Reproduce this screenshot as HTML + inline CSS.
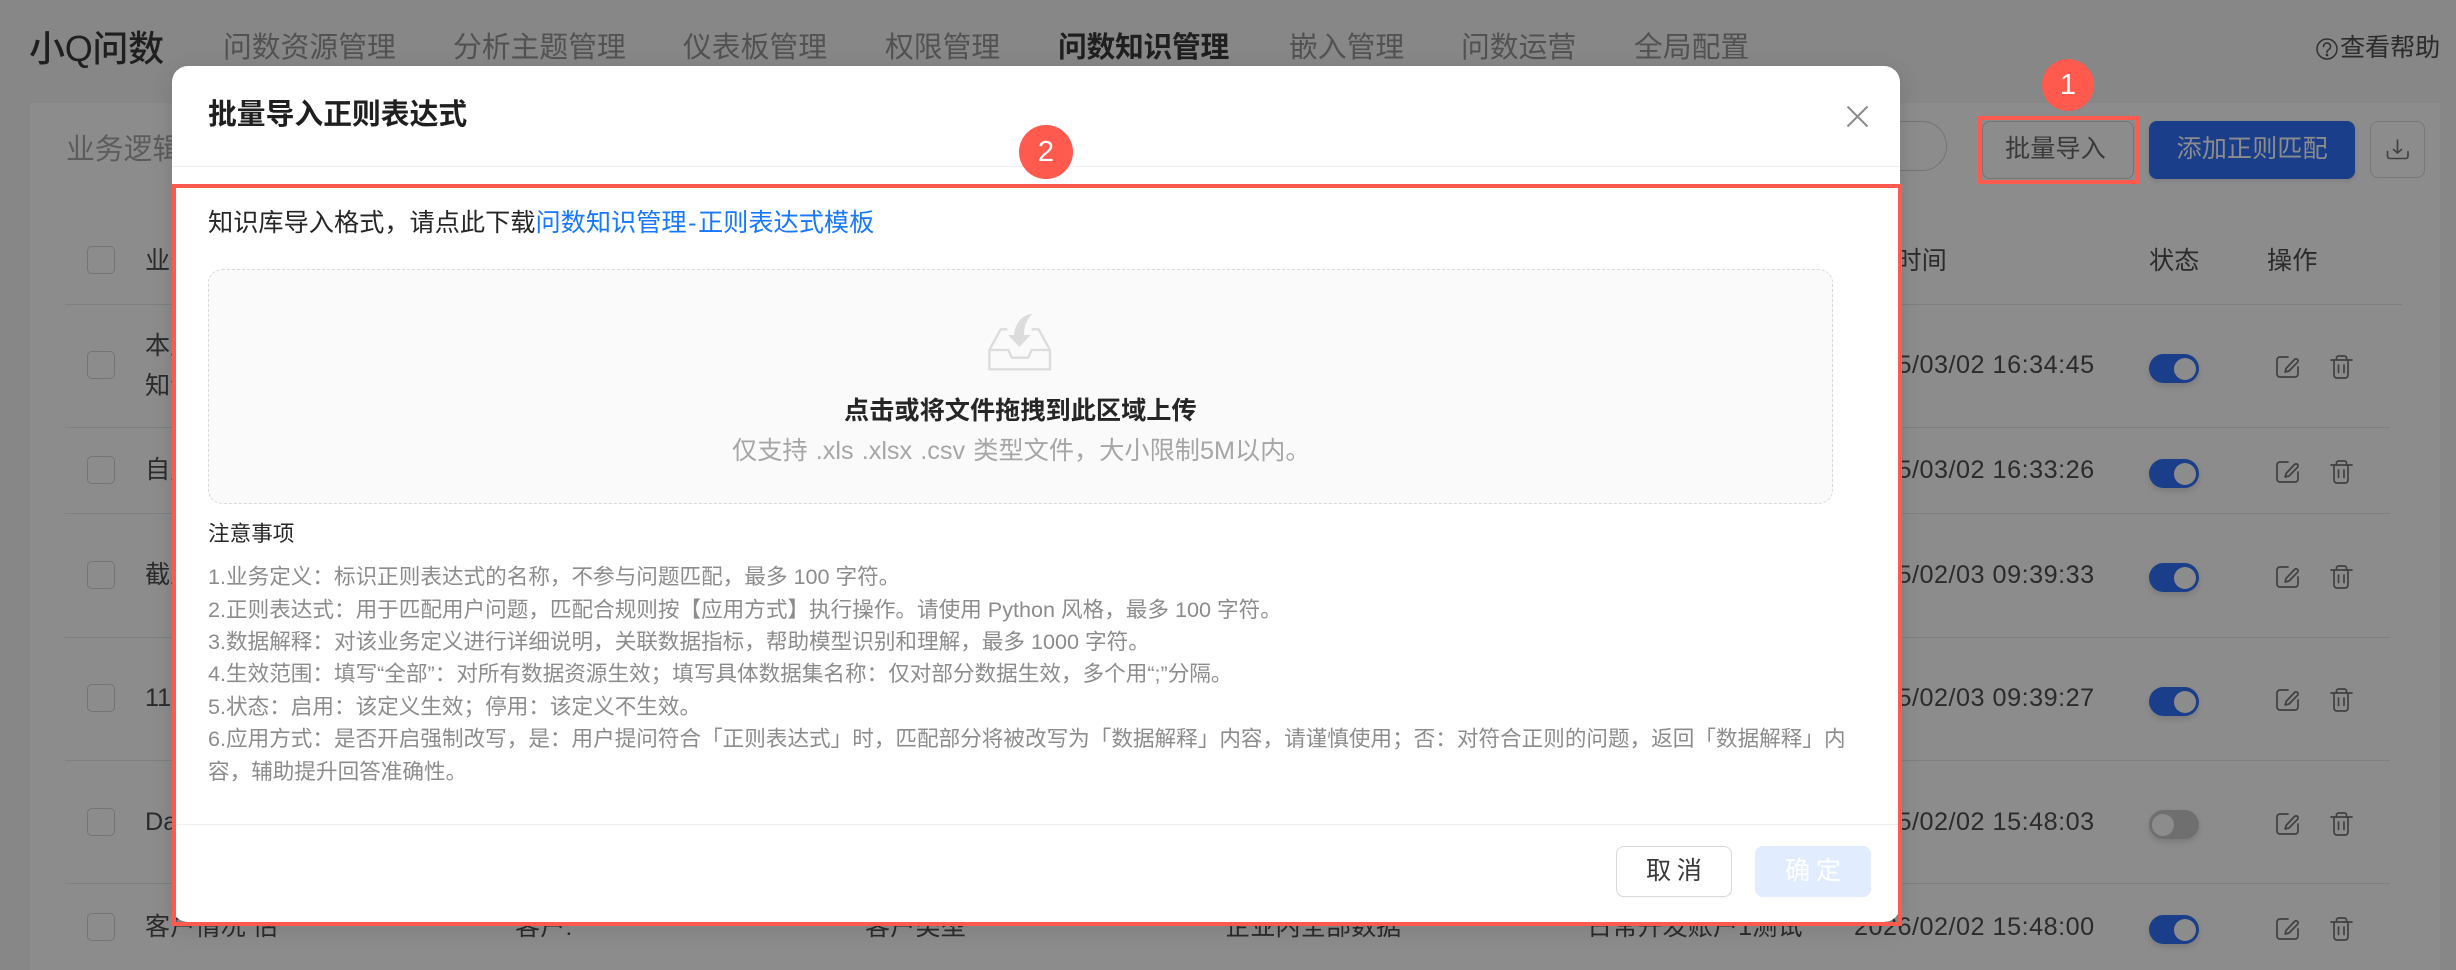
<!DOCTYPE html>
<html lang="zh-CN"><head><meta charset="utf-8"><title>批量导入正则表达式</title>
<style>
*{box-sizing:border-box;margin:0;padding:0}
html,body{width:2456px;height:970px;overflow:hidden;background:#878787}
body{position:relative;font-family:"Liberation Sans","Noto Sans CJK SC",sans-serif}
.t{position:absolute;white-space:nowrap;line-height:1}
.nav{font-size:28.8px;color:#525252;top:34px}
.r{font-size:25.2px;color:#2b2b2b}
.card{position:absolute;left:30px;top:103px;width:2410px;height:867px;background:#8c8c8c}
.hl{position:absolute;left:65px;width:2325px;height:1px;background:#7f7f7f}
.cb{position:absolute;left:87px;width:28px;height:28px;border:1.5px solid #747474;border-radius:5px;background:#8c8c8c}
.tg{position:absolute;left:2149px;width:50px;height:29px;border-radius:15px;background:#1a3e8a;box-shadow:0 3px 6px rgba(0,0,0,.12)}
.tg i{position:absolute;left:25px;top:3.5px;width:22px;height:22px;border-radius:50%;background:#8c8c8c}
.tg.off{background:#6f6f6f}.tg.off i{left:3px}
.ic{position:absolute;left:2260px;width:110px;height:32px;overflow:visible}
.btn{position:absolute;border-radius:8px;top:121px;height:58px}
.dlg{position:absolute;left:172px;top:66px;width:1728px;height:856px;background:#fff;border-radius:16px;box-shadow:0 6px 24px rgba(0,0,0,.12)}
.red{position:absolute;border:4px solid #ff5a4d}
.badge{position:absolute;border-radius:50%;background:#ff5a4d;color:#fff;font-size:29px;text-align:center;font-weight:500}
.note{font-size:21.6px;color:#8c8c8c;left:208px}
</style></head>
<body>
<svg width="0" height="0" style="position:absolute"><defs>
<symbol id="ops" viewBox="0 0 110 32">
<g fill="none" stroke="#404040" stroke-width="1.7" stroke-linecap="round" stroke-linejoin="round">
<path d="M28 3H20a3 3 0 0 0-3 3V20a3 3 0 0 0 3 3H35a3 3 0 0 0 3-3V13"/>
<path d="M26 14.5L34.500 5.500a2 2 0 0 1 3 2.800L29 17l-3.800 1z"/>
<path d="M71 6H92M76.500 6V4a2 2 0 0 1 2-2h6a2 2 0 0 1 2 2V6M74 6V21a3 3 0 0 0 3 3h8a3 3 0 0 0 3-3V6M78.500 11V18.500M84 11V18.500"/>
</g></symbol>
</defs></svg>

<div class="t" style="left:29px;top:31px;font-size:36px;color:#1f1f1f;font-weight:500;letter-spacing:-.3px">小Q问数</div>
<div class="t nav" style="left:223px">问数资源管理</div>
<div class="t nav" style="left:453px">分析主题管理</div>
<div class="t nav" style="left:683px">仪表板管理</div>
<div class="t nav" style="left:885px">权限管理</div>
<div class="t nav" style="left:1058px;color:#1f1f1f;font-weight:700;letter-spacing:-.3px">问数知识管理</div>
<div class="t nav" style="left:1289px">嵌入管理</div>
<div class="t nav" style="left:1461px">问数运营</div>
<div class="t nav" style="left:1634px">全局配置</div>
<svg style="position:absolute;left:2315px;top:37px" width="24" height="24" viewBox="0 0 24 24" fill="none" stroke="#303030" stroke-width="1.500"><circle cx="12" cy="12" r="10"/><path d="M8.500 9.500a3.500 3.500 0 1 1 5.300 3c-1.300.8-1.800 1.300-1.800 2.700" stroke-linecap="round"/><circle cx="12" cy="18" r=".6" fill="#303030"/></svg>
<div class="t" style="left:2340px;top:36px;font-size:25.2px;color:#2b2b2b;letter-spacing:-.2px">查看帮助</div>

<div class="card"></div>
<div class="t" style="left:66px;top:136px;font-size:28.8px;color:#5c5c5c">业务逻辑</div>
<div class="btn" style="left:1700px;width:247px;top:121px;height:50px;border:1.500px solid #747474;border-radius:25px"></div>
<div class="btn" style="left:1982px;width:152px;border:1.500px solid #747474"></div>
<div class="t r" style="left:2005px;top:137px;color:#3a3a3a">批量导入</div>
<div class="btn" style="left:2149px;width:206px;background:#1a3e8a;box-shadow:0 2px 4px rgba(0,0,0,.1)"></div>
<div class="t r" style="left:2176.500px;top:137px;color:#8c8c8c">添加正则匹配</div>
<div class="btn" style="left:2370px;width:55px;height:57px;border:1.500px solid #787878"></div>
<svg style="position:absolute;left:2384px;top:137px" width="28" height="26" viewBox="0 0 28 26" fill="none" stroke="#404040" stroke-width="1.600" stroke-linecap="round" stroke-linejoin="round"><path d="M13.500 3V16M9.500 12.500l4 3.500 4-3.500M3.500 14.500V19a2.500 2.500 0 0 0 2.500 2.500H21.500a2.500 2.500 0 0 0 2.500-2.500V14.500"/></svg>

<div class="hl" style="top:304px;width:2337px"></div>
<div class="hl" style="top:427px"></div>
<div class="hl" style="top:513px"></div>
<div class="hl" style="top:637px"></div>
<div class="hl" style="top:760px"></div>
<div class="hl" style="top:883px"></div>

<div class="cb" style="top:246px"></div><div class="t r" style="left:145px;top:249px">业务定义</div>
<div class="t r" style="left:1846px;top:249px">更新时间</div>
<div class="t r" style="left:2149px;top:249px">状态</div>
<div class="t r" style="left:2267px;top:249px">操作</div>

<div class="cb" style="top:351px"></div>
<div class="t r" style="left:145px;top:334px">本月</div><div class="t r" style="left:145px;top:374px">知识</div>
<div class="t r" style="left:1854px;top:353px;letter-spacing:.5px">2025/03/02 16:34:45</div>
<div class="tg" style="top:354px"><i></i></div><svg class="ic" style="top:354px"><use href="#ops"/></svg>

<div class="cb" style="top:456px"></div>
<div class="t r" style="left:145px;top:458px">自定</div>
<div class="t r" style="left:1854px;top:458px;letter-spacing:.5px">2025/03/02 16:33:26</div>
<div class="tg" style="top:459px"><i></i></div><svg class="ic" style="top:459px"><use href="#ops"/></svg>

<div class="cb" style="top:561px"></div>
<div class="t r" style="left:145px;top:563px">截止</div>
<div class="t r" style="left:1854px;top:563px;letter-spacing:.5px">2025/02/03 09:39:33</div>
<div class="tg" style="top:563px"><i></i></div><svg class="ic" style="top:564px"><use href="#ops"/></svg>

<div class="cb" style="top:684px"></div>
<div class="t r" style="left:145px;top:686px">11</div>
<div class="t r" style="left:1854px;top:686px;letter-spacing:.5px">2025/02/03 09:39:27</div>
<div class="tg" style="top:687px"><i></i></div><svg class="ic" style="top:687px"><use href="#ops"/></svg>

<div class="cb" style="top:808px"></div>
<div class="t r" style="left:145px;top:810px">Data</div>
<div class="t r" style="left:1854px;top:810px;letter-spacing:.5px">2025/02/02 15:48:03</div>
<div class="tg off" style="top:810px"><i></i></div><svg class="ic" style="top:811px"><use href="#ops"/></svg>

<div class="cb" style="top:913px"></div>
<div class="t r" style="left:145px;top:915px">客户情况 估</div>
<div class="t r" style="left:515px;top:915px">客户:</div>
<div class="t r" style="left:865px;top:915px">客户类型</div>
<div class="t r" style="left:1225px;top:915px">企业内全部数据</div>
<div class="t r" style="left:1587px;top:915px">日常开发账户1测试</div>
<div class="t r" style="left:1854px;top:915px;letter-spacing:.5px">2026/02/02 15:48:00</div>
<div class="tg" style="top:915px"><i></i></div><svg class="ic" style="top:916px"><use href="#ops"/></svg>

<div class="dlg"></div>
<div class="t" style="left:208px;top:101px;font-size:28.8px;color:#1f1f1f;font-weight:700">批量导入正则表达式</div>
<svg style="position:absolute;left:1845px;top:104px" width="25" height="25" viewBox="0 0 25 25" stroke="#8c8c8c" stroke-width="2" fill="none"><path d="M2.500 2.500L22.500 22.500M22.500 2.500L2.500 22.500"/></svg>
<div style="position:absolute;left:172px;top:166px;width:1728px;height:1px;background:#efefef"></div>

<div class="t" style="left:208px;top:211px;font-size:25.2px;color:#262626">知识库导入格式，请点此下载<span style="color:#1677ff">问数知识管理<span style="letter-spacing:1.500px;margin-left:1.500px">-</span>正则表达式模板</span></div>

<div style="position:absolute;left:208px;top:269px;width:1625px;height:235px;background:#fafafa;border:1.500px dashed #d9d9d9;border-radius:14px"></div>
<svg style="position:absolute;left:900px;top:290px" width="220" height="110" viewBox="0 0 660 330"><g fill="none" stroke="#dcdcdc" stroke-width="7" stroke-linejoin="round"><path d="M322 118H302L268 180V238H450V180L416 118H395"/><path d="M268 180H325L335 203H385L395 180H450"/></g><path d="M398 71C365 75 345 100 342 135H324L358 171L392 135H372C372 108 380 88 398 71Z" fill="#dcdcdc"/></svg>
<div class="t" style="left:844px;top:399px;font-size:25.2px;color:#262626;font-weight:700">点击或将文件拖拽到此区域上传</div>
<div class="t" style="left:732px;top:439px;font-size:25.2px;color:#a6a6a6;word-spacing:1.200px">仅支持 .xls .xlsx .csv 类型文件，大小限制5M以内。</div>

<div class="t" style="left:208px;top:523px;font-size:21.6px;color:#262626">注意事项</div>
<div class="t note" style="top:566px">1.业务定义：标识正则表达式的名称，不参与问题匹配，最多 100 字符。</div>
<div class="t note" style="top:599px">2.正则表达式：用于匹配用户问题，匹配合规则按【应用方式】执行操作。请使用 Python 风格，最多 100 字符。</div>
<div class="t note" style="top:631px">3.数据解释：对该业务定义进行详细说明，关联数据指标，帮助模型识别和理解，最多 1000 字符。</div>
<div class="t note" style="top:663px">4.生效范围：填写“全部”：对所有数据资源生效；填写具体数据集名称：仅对部分数据生效，多个用“;”分隔。</div>
<div class="t note" style="top:696px">5.状态：启用：该定义生效；停用：该定义不生效。</div>
<div class="t note" style="top:728px">6.应用方式：是否开启强制改写，是：用户提问符合「正则表达式」时，匹配部分将被改写为「数据解释」内容，请谨慎使用；否：对符合正则的问题，返回「数据解释」内</div>
<div class="t note" style="top:761px">容，辅助提升回答准确性。</div>

<div style="position:absolute;left:172px;top:824px;width:1728px;height:1px;background:#efefef"></div>
<div style="position:absolute;left:1616px;top:846px;width:116px;height:51px;border:1.500px solid #d9d9d9;border-radius:8px;background:#fff;box-shadow:0 2px 0 rgba(0,0,0,.02)"></div>
<div class="t" style="left:1646px;top:859px;font-size:25.2px;color:#3a3a3a;letter-spacing:5.500px">取消</div>
<div style="position:absolute;left:1755px;top:846px;width:116px;height:51px;border-radius:8px;background:#e2ecff"></div>
<div class="t" style="left:1785px;top:859px;font-size:25.2px;color:#fff;letter-spacing:5.500px">确定</div>

<div class="red" style="left:172px;top:184px;width:1730px;height:742px"></div>
<div class="red" style="left:1978px;top:116px;width:162px;height:68px"></div>
<div class="badge" style="left:1019px;top:125px;width:54px;height:54px;line-height:54px">2</div>
<div class="badge" style="left:2042px;top:59px;width:52px;height:52px;line-height:52px">1</div>
</body></html>
